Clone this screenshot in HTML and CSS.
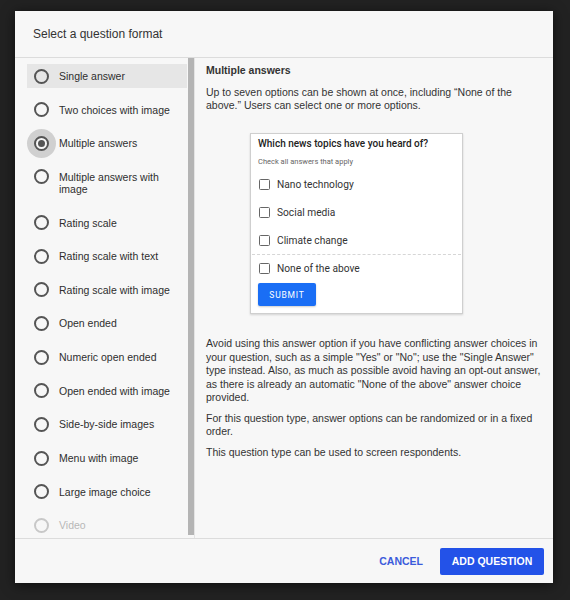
FILE: index.html
```html
<!DOCTYPE html>
<html>
<head>
<meta charset="utf-8">
<link rel="stylesheet" href="styles.css">
</head>
<body>
<div class="dialog">
  <div class="header">Select a question format</div>
  <div class="body">
    <div class="list">
      <div class="item hover"><span class="radio"></span><span>Single answer</span></div>
      <div class="item"><span class="radio"></span><span>Two choices with image</span></div>
      <div class="item"><span class="radio checked"></span><span>Multiple answers</span></div>
      <div class="item"><span class="radio"></span><span>Multiple answers with image</span></div>
      <div class="item"><span class="radio"></span><span>Rating scale</span></div>
      <div class="item"><span class="radio"></span><span>Rating scale with text</span></div>
      <div class="item"><span class="radio"></span><span>Rating scale with image</span></div>
      <div class="item"><span class="radio"></span><span>Open ended</span></div>
      <div class="item"><span class="radio"></span><span>Numeric open ended</span></div>
      <div class="item"><span class="radio"></span><span>Open ended with image</span></div>
      <div class="item"><span class="radio"></span><span>Side-by-side images</span></div>
      <div class="item"><span class="radio"></span><span>Menu with image</span></div>
      <div class="item"><span class="radio"></span><span>Large image choice</span></div>
      <div class="item disabled"><span class="radio"></span><span>Video</span></div>
    </div>
    <div class="scroll"></div>
    <div class="panel">
      <div class="ptitle">Multiple answers</div>
      <p class="intro">Up to seven options can be shown at once, including “None of the above.” Users can select one or more options.</p>
      <div class="card">
        <div class="q">Which news topics have you heard of?</div>
        <div class="hint">Check all answers that apply</div>
        <div class="opts">
          <div class="opt"><span class="cb"></span>Nano technology</div>
          <div class="opt"><span class="cb"></span>Social media</div>
          <div class="opt"><span class="cb"></span>Climate change</div>
          <div class="opt none"><span class="cb"></span>None of the above</div>
        </div>
        <div class="submit">SUBMIT</div>
      </div>
      <p class="avoid">Avoid using this answer option if you have conflicting answer choices in your question, such as a simple "Yes" or "No"; use the "Single Answer" type instead. Also, as much as possible avoid having an opt-out answer, as there is already an automatic "None of the above" answer choice provided.</p>
      <p class="more">For this question type, answer options can be randomized or in a fixed order.</p>
      <p class="more">This question type can be used to screen respondents.</p>
    </div>
  </div>
  <div class="footer">
    <button class="cancel">CANCEL</button>
    <button class="add">ADD QUESTION</button>
  </div>
</div>
</body>
</html>
```
FILE: styles.css
```css
* { box-sizing: border-box; margin: 0; padding: 0; }
html, body { height: 100%; }
body {
  background: #222;
  font-family: "Liberation Sans", Arial, sans-serif;
  color: #333;
  padding: 11px 17px 0 15px;
  overflow: hidden;
}
.dialog {
  width: 538px;
  height: 572px;
  background: #f7f7f7;
  display: flex;
  flex-direction: column;
  box-shadow: 0 2px 12px rgba(0,0,0,.6);
}
.header {
  flex: none;
  height: 47px;
  border-bottom: 1px solid #dcdcdc;
  padding-left: 18px;
  display: flex;
  align-items: center;
  font-size: 12px;
  color: #333;
}
.body {
  flex: 1;
  min-height: 0;
  display: flex;
  overflow: hidden;
}
.list {
  flex: none;
  width: 173px;
  padding: 6px 1px 0 12px;
  overflow: hidden;
}
.item {
  display: flex;
  align-items: flex-start;
  padding: 6px 0 6px 7px;
  margin-bottom: 9.65px;
  font-size: 10.5px;
  line-height: 12px;
  color: #2e2e2e;
}
.item.hover { background: #e6e6e6; }
.radio {
  flex: none;
  position: relative;
  width: 15px;
  height: 15px;
  margin: -1.5px 10px -1.5px 0;
  border: 2px solid #555;
  border-radius: 50%;
}
.radio.checked {
  box-shadow: 0 0 0 7px #d0d0d0;
  background: #f7f7f7;
}
.radio.checked::after {
  content: "";
  position: absolute;
  left: 50%;
  top: 50%;
  width: 7px;
  height: 7px;
  margin: -3.5px 0 0 -3.5px;
  border-radius: 50%;
  background: #555;
}
.item.disabled { color: #b8b8b8; }
.item.disabled .radio { border-color: #c8c8c8; }
.scroll {
  flex: none;
  width: 6px;
  background: #b4b4b4;
  margin-bottom: 3px;
}
.panel {
  flex: 1;
  border-left: 1px solid #e4e4e4;
  padding: 6px 8px 0 11px;
  font-size: 10.5px;
}
.ptitle {
  font-weight: bold;
  line-height: 13px;
  color: #333;
}
.panel p {
  line-height: 13.4px;
  color: #333;
}
.intro { margin-top: 8.8px; }
.avoid { margin-top: 23px; }
.more { margin-top: 7.6px; }
.card {
  width: 213px;
  margin: 20px 0 0 44px;
  background: #fff;
  border: 1px solid #cfcfcf;
  box-shadow: 0 1px 2px rgba(0,0,0,.15);
  font-family: Roboto, "Liberation Sans", sans-serif;
}
.q {
  padding: 3px 7px 0;
  font-size: 10px;
  font-weight: 500;
  line-height: 13px;
  color: #222;
}
.hint {
  padding: 0 7px;
  margin-top: 7px;
  font-size: 7.5px;
  line-height: 10px;
  color: #666;
}
.opts { margin-top: 3.7px; }
.opt {
  height: 28px;
  display: flex;
  align-items: center;
  padding-left: 8px;
  font-size: 10.2px;
  color: #333;
}
.opt.none {
  border-top: 1px dashed #d6d6d6;
  margin: 0 1px;
  padding-left: 7px;
}
.cb {
  flex: none;
  width: 11px;
  height: 11px;
  margin-right: 7px;
  border: 1.5px solid #666;
  border-radius: 1.5px;
}
.submit {
  width: 58px;
  height: 23px;
  margin: 1px 0 7px 7px;
  display: flex;
  align-items: center;
  justify-content: center;
  background: #1a6ef5;
  color: #fff;
  font-size: 8.5px;
  font-weight: 400;
  letter-spacing: .8px;
  border-radius: 2px;
  box-shadow: 0 1px 2px rgba(0,0,0,.2);
}
.footer {
  flex: none;
  height: 45px;
  border-top: 1px solid #dcdcdc;
  display: flex;
  justify-content: flex-end;
  align-items: center;
  gap: 17px;
  padding-right: 9px;
}
.footer button {
  border: none;
  font-family: "Liberation Sans", Arial, sans-serif;
  font-size: 10.5px;
  font-weight: bold;
  cursor: pointer;
}
.cancel {
  background: none;
  color: #3b5bdb;
}
.add {
  width: 104px;
  height: 27px;
  background: #2352e8;
  color: #fff;
  border-radius: 2px;
}
```
